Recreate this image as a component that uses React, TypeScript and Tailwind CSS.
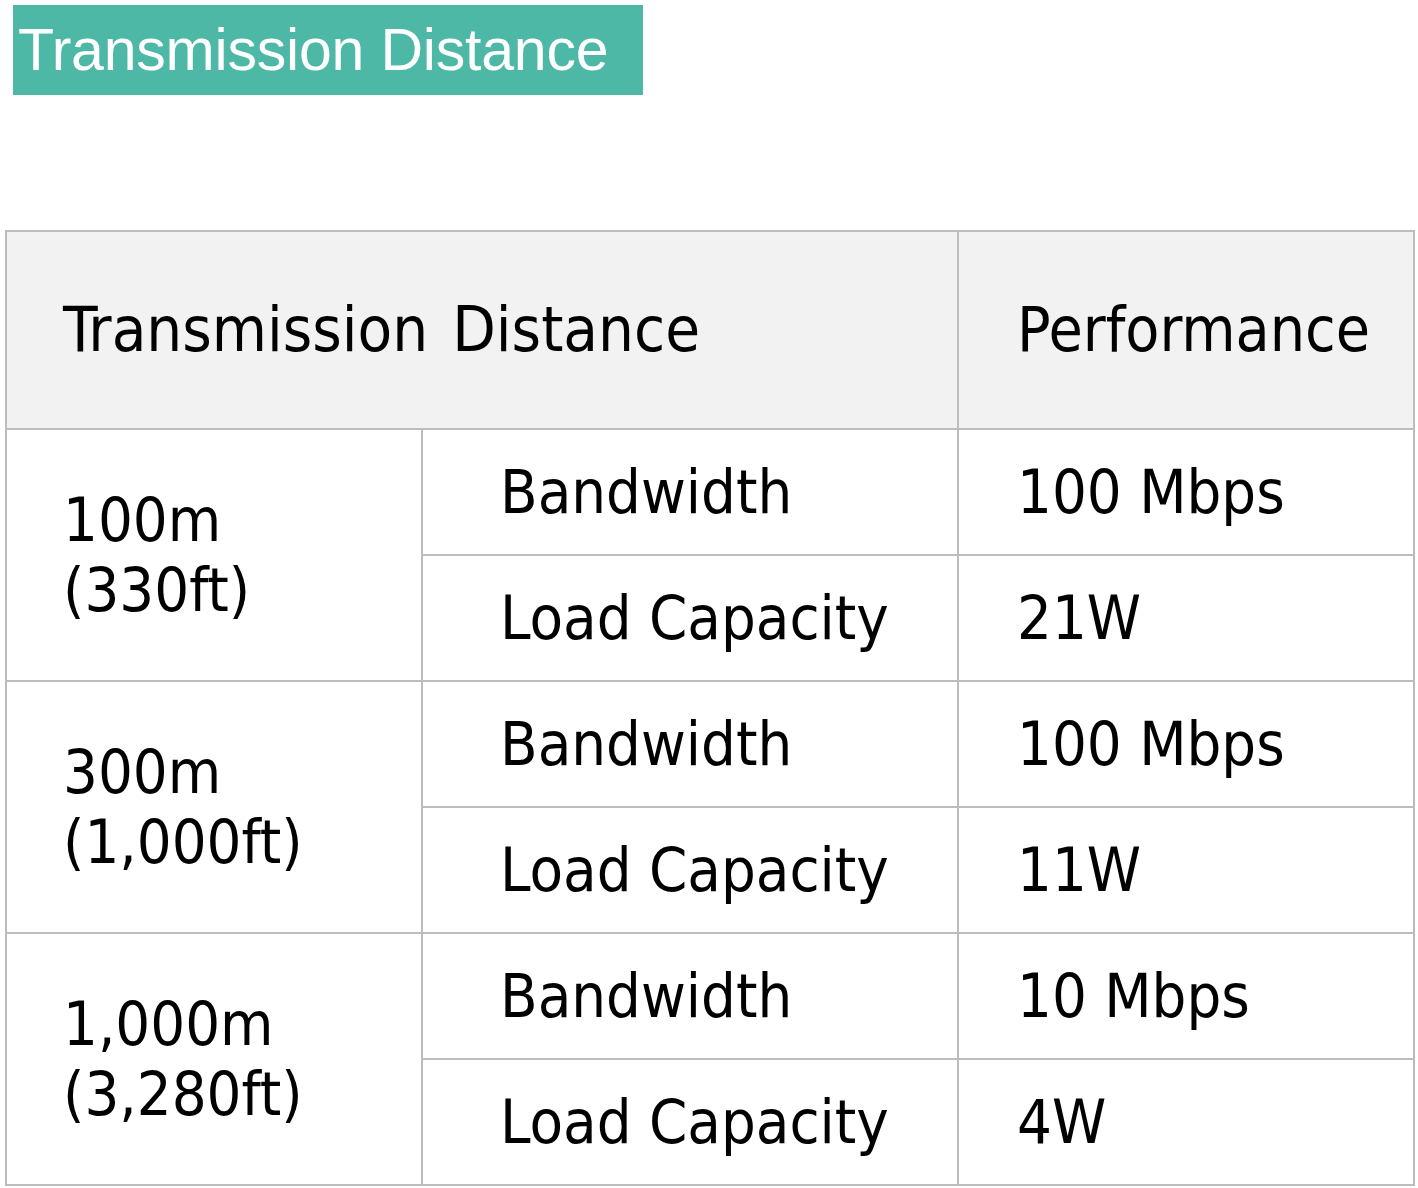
import React from "react";

type Group = {
  distance: string;
  feet: string;
  bandwidth: string;
  load: string;
};

const groups: Group[] = [
  { distance: "100m", feet: "(330ft)", bandwidth: "100 Mbps", load: "21W" },
  { distance: "300m", feet: "(1,000ft)", bandwidth: "100 Mbps", load: "11W" },
  { distance: "1,000m", feet: "(3,280ft)", bandwidth: "10 Mbps", load: "4W" },
];

const cell = "border-2 border-[#bdbdbd] align-middle";

export default function App() {
  return (
    <div className="w-[1418px] h-[1188px] bg-white flex flex-col overflow-hidden">
      {/* Title badge */}
      <div className="ml-[13px] mt-[5px] w-[630px] h-[90px] bg-[#4db8a6] flex items-center pl-[5px]">
        <span className="text-white text-[59px] leading-none font-['Liberation_Sans',Arial,sans-serif] tracking-[-0.2px]">
          Transmission Distance
        </span>
      </div>

      <table className="mt-[135px] ml-[5px] w-[1410px] border-collapse text-black font-['DejaVu_Sans_Condensed','DejaVu_Sans',sans-serif] text-[61px] leading-[70px]">
        <thead>
          <tr className="h-[198px] bg-[#f2f2f2]">
            <th colSpan={2} className={`${cell} text-left font-normal text-[63px] pl-[56px] [word-spacing:6px]`}>
              Transmission Distance
            </th>
            <th className={`${cell} w-[456px] text-left font-normal text-[62px] pl-[58px]`}>
              Performance
            </th>
          </tr>
        </thead>
        <tbody>
          {groups.map((g) => (
            <React.Fragment key={g.distance}>
              <tr className="h-[126px]">
                <td rowSpan={2} className={`${cell} w-[416px] pl-[56px]`}>
                  <div>{g.distance}</div>
                  <div>{g.feet}</div>
                </td>
                <td className={`${cell} pl-[77px]`}>Bandwidth</td>
                <td className={`${cell} pl-[58px]`}>{g.bandwidth}</td>
              </tr>
              <tr className="h-[126px]">
                <td className={`${cell} pl-[77px]`}>Load Capacity</td>
                <td className={`${cell} pl-[58px]`}>{g.load}</td>
              </tr>
            </React.Fragment>
          ))}
        </tbody>
      </table>
    </div>
  );
}
